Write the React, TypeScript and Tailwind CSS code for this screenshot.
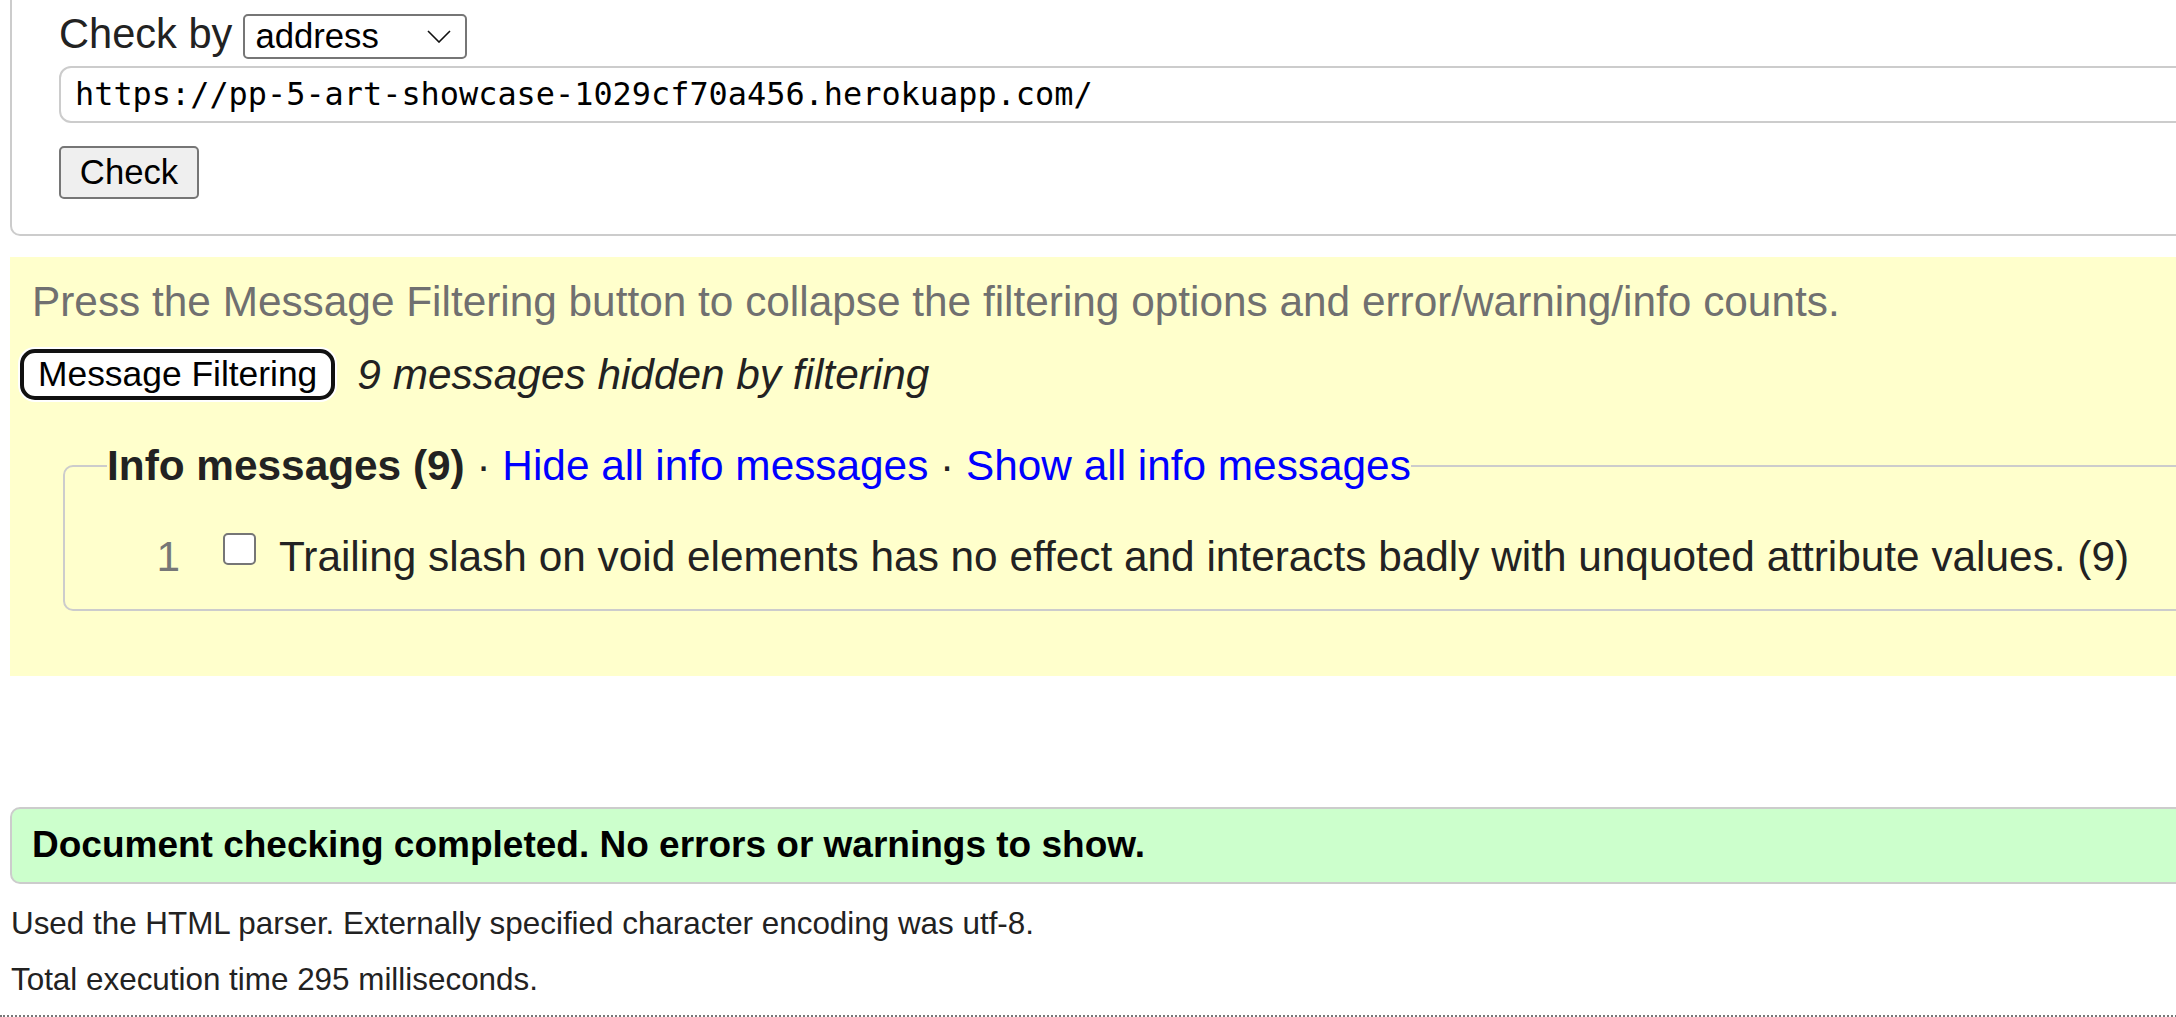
const Chevron = () => (
  <svg width="24" height="13" viewBox="0 0 24 13" fill="none" stroke="#111" strokeWidth="1.6">
    <path d="M1 1l11 11L23 1" />
  </svg>
);

const App = () => {
  return (
    <div className="h-[1017px] w-full overflow-hidden bg-white font-['Liberation_Sans',Arial,sans-serif] text-[#222]">
      <div className="w-[2400px]">
        <form className="ml-[10px] -mt-[20px] flex flex-col rounded-[10px] border-2 border-[#ccc] pt-[28px] pb-[35px] pl-[47px]">
          <div className="flex items-baseline">
            <span className="text-[41.6px] leading-[48px]">Check by</span>
            <div className="ml-[11px] flex h-[45px] w-[224px] items-center justify-between rounded-[5px] border-2 border-[#767676] pl-[10px] pr-[14px] text-[34.7px] leading-[40px] text-black">
              <span>address</span>
              <Chevron />
            </div>
          </div>

          <input
            readOnly
            defaultValue="https://pp-5-art-showcase-1029cf70a456.herokuapp.com/"
            className="mt-[7px] h-[57px] rounded-[12px] border-2 border-[#ccc] pl-[14px] font-['DejaVu_Sans_Mono',monospace] text-[31.9px] text-black outline-none"
          />

          <button
            type="button"
            className="mt-[23px] h-[53px] w-[140px] self-start rounded-[5px] border-2 border-[#767676] bg-[#efefef] text-[34.7px] leading-[40px] text-black"
          >
            Check
          </button>
        </form>

        <div className="ml-[10px] mt-[21px] bg-[#ffc] pt-[21px] pb-[65px]">
          <p className="pl-[22px] text-[42.35px] leading-[48px] text-[#707070]">
            Press the Message Filtering button to collapse the filtering options and error/warning/info counts.
          </p>

          <div className="ml-[10px] mt-[23px] flex h-[51px] items-center gap-[22px]">
            <button
              type="button"
              className="h-[51px] rounded-[15px] border-4 border-[#111] bg-white px-[14px] text-[35.4px] leading-[40px] text-black ring-2 ring-white"
            >
              Message Filtering
            </button>
            <span className="text-[42.35px] italic leading-[51px]">9 messages hidden by filtering</span>
          </div>

          <fieldset className="ml-[53px] mt-[42px] rounded-[10px] border-2 border-[#ccc] pb-[28px]">
            <legend className="ml-[42px] text-[42.35px] leading-[48px]">
              <strong>Info messages (9)</strong>
              {' · '}
              <a href="#" className="text-[#00f]">Hide all info messages</a>
              {' · '}
              <a href="#" className="text-[#00f]">Show all info messages</a>
            </legend>

            <div className="mt-[43px] flex items-start text-[42.35px] leading-[48px]">
              <span className="w-[115px] shrink-0 text-right text-[#777]">1</span>
              <span className="ml-[43px] h-[32px] w-[33px] shrink-0 rounded-[5px] border-2 border-[#767676] bg-white" />
              <span className="ml-[23px] whitespace-nowrap">
                Trailing slash on void elements has no effect and interacts badly with unquoted attribute values. (9)
              </span>
            </div>
          </fieldset>
        </div>

        <div className="ml-[10px] mt-[131px] flex h-[77px] items-center rounded-[10px] border-2 border-[#ccc] bg-[#cfc] pl-[20px] text-[37px] font-bold leading-[44px] text-black">
          Document checking completed. No errors or warnings to show.
        </div>

        <p className="mt-[22px] pl-[11px] text-[31.4px] leading-[36px]">
          Used the HTML parser. Externally specified character encoding was utf-8.
        </p>
        <p className="mt-[20px] pl-[11px] text-[31.4px] leading-[36px]">Total execution time 295 milliseconds.</p>

        <div className="mt-[17px] border-t-2 border-dotted border-[#777]" />
      </div>
    </div>
  );
};

export default App;
